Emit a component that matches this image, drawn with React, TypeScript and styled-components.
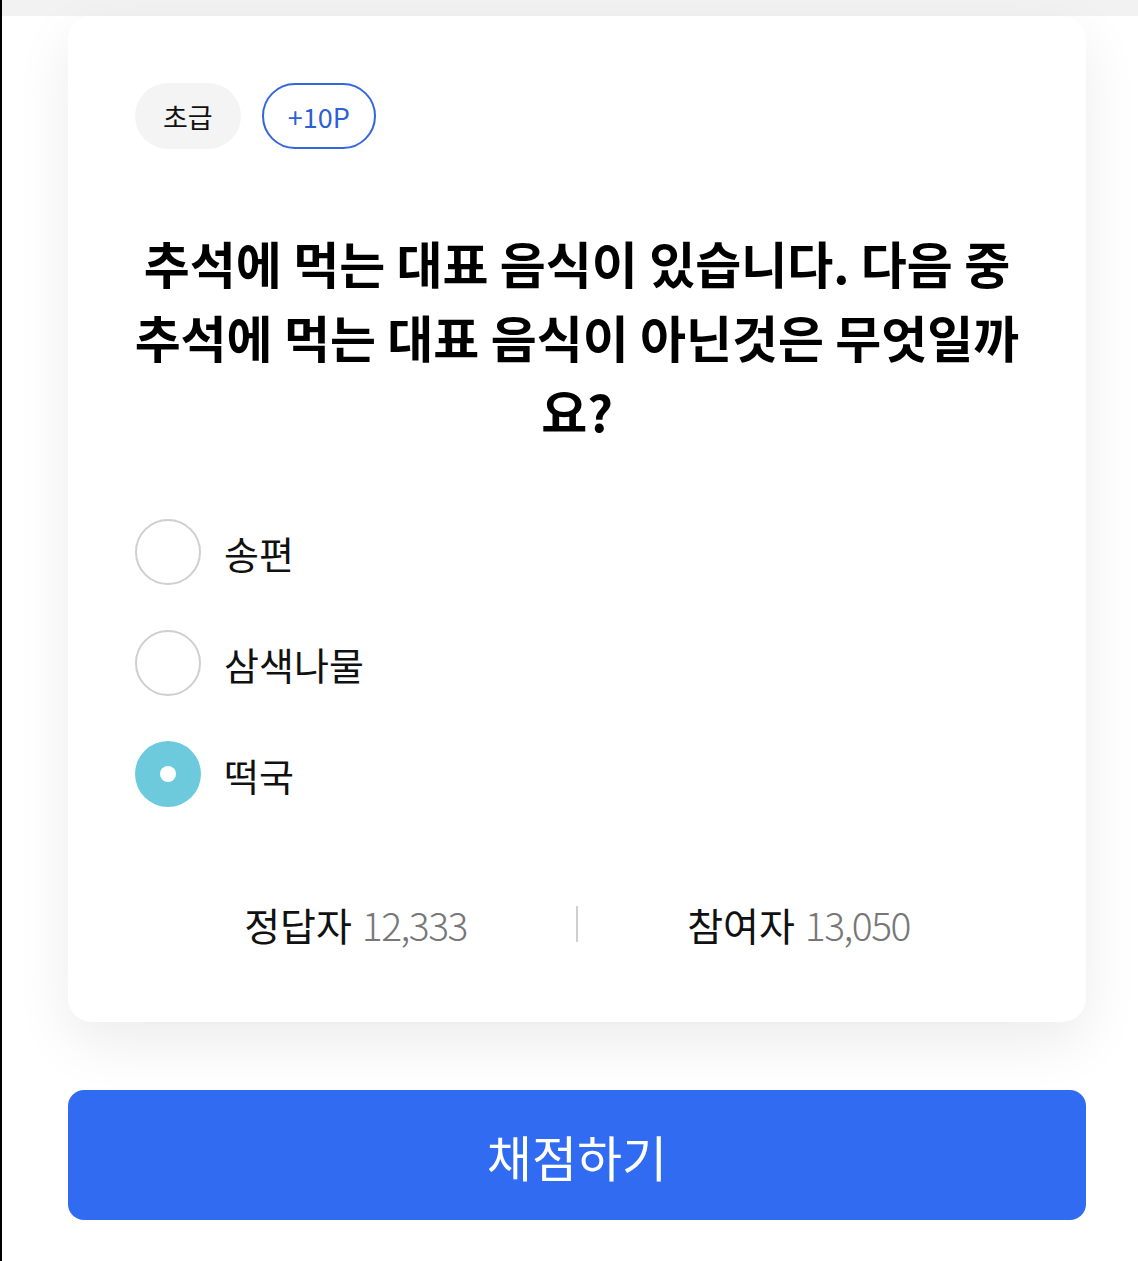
import * as React from 'react';
import styled, { createGlobalStyle } from 'styled-components';

const GlobalStyle = createGlobalStyle`
	html, body {
		margin: 0;
		padding: 0;
		background: #fff;
	}
	body {
		font-family: 'Noto Sans CJK KR', 'Noto Sans', sans-serif;
		color: #111;
	}
`;

const Page = styled.div`
	min-height: 1261px;
	box-sizing: border-box;
	border-left: 2px solid #000;
	padding: 16px 0 0 66px;
	background: linear-gradient(#f2f2f2 0, #f2f2f2 16px, #fff 16px);
`;

const Column = styled.div`
	width: 1018px;
	display: flex;
	flex-direction: column;
`;

const Card = styled.div`
	background: #fff;
	border-radius: 24px;
	padding: 67px 67px 70px;
	box-shadow: 0 20px 56px rgba(0, 0, 0, 0.08);
	display: flex;
	flex-direction: column;
`;

const BadgeRow = styled.div`
	display: flex;
	gap: 21px;
`;

const Badge = styled.span<{ outlined?: boolean }>`
	height: 66px;
	box-sizing: border-box;
	padding: 0 ${p => (p.outlined ? '24px' : '28px')};
	border-radius: 33px;
	display: inline-flex;
	align-items: center;
	font-size: 27px;
	background: ${p => (p.outlined ? '#fff' : '#f4f4f4')};
	border: ${p => (p.outlined ? '2.5px solid #3466dc' : 'none')};
	color: ${p => (p.outlined ? '#2d5fd6' : '#111')};
`;

const Question = styled.h2`
	margin: 76px -7px 0;
	font-size: 50px;
	line-height: 74px;
	font-weight: 700;
	text-align: center;
	color: #000;
`;

const Options = styled.div`
	margin-top: 72px;
	display: flex;
	flex-direction: column;
	gap: 45px;
`;

const Option = styled.label`
	display: flex;
	align-items: center;
	gap: 23px;
	font-size: 38px;
	height: 66px;
	color: #111;
`;

const Radio = styled.span<{ checked?: boolean }>`
	width: 66px;
	height: 66px;
	box-sizing: border-box;
	border-radius: 50%;
	border: ${p => (p.checked ? 'none' : '2.5px solid #cfcfcf')};
	background: ${p => (p.checked ? '#6ccadc' : '#fff')};
	display: flex;
	align-items: center;
	justify-content: center;
	flex-shrink: 0;

	&::after {
		content: '';
		display: ${p => (p.checked ? 'block' : 'none')};
		width: 16px;
		height: 16px;
		border-radius: 50%;
		background: #fff;
	}
`;

const Stats = styled.div`
	margin-top: 89px;
	height: 56px;
	display: flex;
	align-items: center;
`;

const Stat = styled.div`
	flex: 1;
	text-align: center;
	font-size: 39px;
	color: #111;
	white-space: nowrap;
`;

const StatValue = styled.span`
	color: #777;
	margin-left: 10px;
	font-weight: 300;
	letter-spacing: -1.5px;
`;

const Divider = styled.span`
	width: 2px;
	height: 36px;
	background: #cfcfcf;
`;

const SubmitButton = styled.button`
	margin-top: 68px;
	height: 130px;
	border: none;
	border-radius: 16px;
	background: #316bf2;
	color: #fff;
	font-family: inherit;
	font-size: 49px;
	font-weight: 400;
	cursor: pointer;
`;

const options = [
	{ label: '송편', checked: false },
	{ label: '삼색나물', checked: false },
	{ label: '떡국', checked: true }
];

const App = () => (
	<React.Fragment>
		<GlobalStyle />
		<Page>
			<Column>
				<Card>
					<BadgeRow>
						<Badge>초급</Badge>
						<Badge outlined={true}>+10P</Badge>
					</BadgeRow>
					<Question>
						추석에 먹는 대표 음식이 있습니다. 다음 중 추석에 먹는
						대표 음식이 아닌것은 무엇일까요?
					</Question>
					<Options>
						{options.map(o => (
							<Option key={o.label}>
								<Radio checked={o.checked} />
								{o.label}
							</Option>
						))}
					</Options>
					<Stats>
						<Stat>
							정답자<StatValue>12,333</StatValue>
						</Stat>
						<Divider />
						<Stat>
							참여자<StatValue>13,050</StatValue>
						</Stat>
					</Stats>
				</Card>
				<SubmitButton>채점하기</SubmitButton>
			</Column>
		</Page>
	</React.Fragment>
);

export default App;
